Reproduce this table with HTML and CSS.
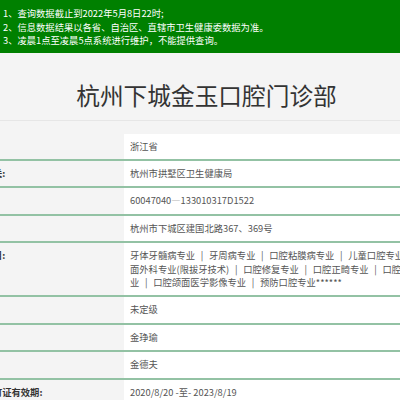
FILE: index.html
```html
<!DOCTYPE html>
<html lang="zh-CN">
<head>
<meta charset="utf-8">
<title>杭州下城金玉口腔门诊部</title>
<link rel="stylesheet" href="styles.css">
</head>
<body>
<div class="notice">
  <p>1、查询数据截止到2022年5月8日22时;</p>
  <p>2、信息数据结果以各省、自治区、直辖市卫生健康委数据为准。</p>
  <p>3、凌晨1点至凌晨5点系统进行维护，不能提供查询。</p>
</div>
<h1 class="title">杭州下城金玉口腔门诊部</h1>
<div class="wrap">
<table class="info">
  <colgroup><col class="c-label"><col class="c-value"></colgroup>
  <tr><th>省份:</th><td>浙江省</td></tr>
  <tr><th>发证机关:</th><td>杭州市拱墅区卫生健康局</td></tr>
  <tr><th>登记号:</th><td>60047040—133010317D1522</td></tr>
  <tr><th>地址:</th><td>杭州市下城区建国北路367、369号</td></tr>
  <tr><th>诊疗科目:</th><td class="subjects">牙体牙髓病专业 | 牙周病专业 | 口腔粘膜病专业 | 儿童口腔专业 | 口腔颌<br>面外科专业(限拔牙技术) | 口腔修复专业 | 口腔正畸专业 | 口腔种植专<br>业 | 口腔颌面医学影像专业 | 预防口腔专业******</td></tr>
  <tr><th>等级:</th><td>未定级</td></tr>
  <tr><th>法人:</th><td>金琤瑜</td></tr>
  <tr><th>负责人:</th><td>金德夫</td></tr>
  <tr><th>执业许可证有效期:</th><td>2020/8/20 -至- 2023/8/19</td></tr>
</table>
</div>
</body>
</html>
```
FILE: styles.css
```css
html, body {
  margin: 0;
  padding: 0;
}
body {
  background: #f4f4f4;
  font-family: "Noto Sans CJK SC", "Noto Sans", sans-serif;
  color: #333;
  overflow: hidden;
}
.notice {
  background: #008000;
  color: #fff;
  font-size: 9.3px;
  line-height: 13.5px;
  padding: 7px 3px 5px;
}
.notice p {
  margin: 0;
}
.title {
  margin: 0;
  font-size: 23.7px;
  font-weight: normal;
  line-height: 32px;
  color: #333;
  text-align: center;
  padding: 26px 0 9px 13px;
  border-bottom: 1px solid #e6e6e6;
}
.wrap {
  width: 520px;
  margin: 13px 0 0 -45px;
}
.info {
  table-layout: fixed;
  width: 520px;
  border-collapse: collapse;
  font-size: 9.3px;
  line-height: 13.4px;
}
.c-label {
  width: 169px;
}
.c-value {
  width: 351px;
}
.info th {
  box-sizing: border-box;
  text-align: left;
  vertical-align: top;
  font-weight: bold;
  color: #333;
  padding: 6px 0 6px 10px;
  white-space: nowrap;
  border-bottom: 2px solid #93c2a4;
}
.info td {
  background: #fff;
  color: #555;
  padding: 6px 6px;
  white-space: nowrap;
  overflow: hidden;
  border-bottom: 2px solid #93c2a4;
}
.info td.subjects {
  word-spacing: 3.6px;
}
```
